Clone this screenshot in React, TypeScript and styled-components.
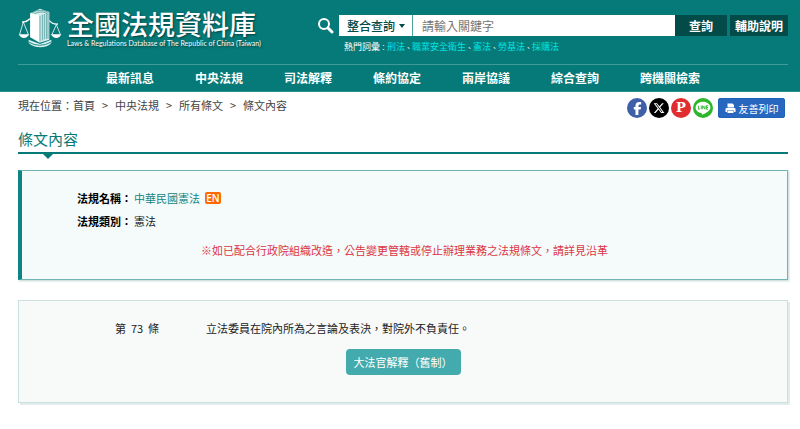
import React from "react";
import styled, { createGlobalStyle } from "styled-components";
import { FaFacebookF, FaXTwitter } from "react-icons/fa6";

const teal = "#067a78";
const darkTeal = "#034b49";

const GlobalStyle = createGlobalStyle`
  *, *::before, *::after { box-sizing: border-box; }
  body {
    margin: 0;
    background: #fff;
    color: #222;
    font-family: "Noto Sans CJK TC", "Liberation Sans", sans-serif;
    font-size: 11px;
    line-height: 16px;
  }
  button, input, select { font-family: inherit; }
  a { color: inherit; text-decoration: none; }
`;

const Header = styled.header`
  background: ${teal};
  padding: 0 12px 0 18px;
  border-bottom: 1px solid #2d8f8d;
`;

const HeaderTop = styled.div`
  display: flex;
  justify-content: space-between;
  gap: 48px;
  height: 64px;
`;

const Brand = styled.a`
  display: flex;
  align-items: flex-start;
  gap: 5px;
  flex: none;
  padding-top: 8px;
  color: #fff;
`;

const BrandText = styled.span`
  display: flex;
  flex-direction: column;
  padding-top: 1px;
  text-shadow: 1px 1px 2px rgba(0, 40, 40, 0.7);
`;

const BrandName = styled.span`
  font-size: 27px;
  line-height: 30px;
  font-weight: 500;
`;

const BrandSub = styled.span`
  font-family: Lato, "Liberation Sans", sans-serif;
  font-size: 7px;
  line-height: 8px;
  white-space: nowrap;
`;

const SearchArea = styled.div`
  flex: 1;
  max-width: 471px;
  padding-top: 15px;
`;

const SearchForm = styled.form`
  display: flex;
  align-items: center;
  height: 21px;
`;

const SearchIcon = styled.svg`
  flex: none;
  margin-right: 5px;
`;

const SelectBox = styled.div`
  display: flex;
  align-items: center;
  position: relative;
  flex: none;
  width: 74px;
  height: 21px;
  background: #fff;
  border-right: 1px solid #4aa3a1;
`;

const ScopeSelect = styled.select`
  appearance: none;
  width: 100%;
  height: 100%;
  border: 0;
  padding: 0 0 0 8px;
  background: transparent;
  color: ${darkTeal};
  font-size: 12px;
  font-weight: 500;
`;

const Caret = styled.span`
  position: absolute;
  right: 7px;
  top: 9px;
  border: 3px solid transparent;
  border-top: 4px solid ${darkTeal};
  border-bottom: 0;
  pointer-events: none;
`;

const Keyword = styled.input`
  flex: 1;
  min-width: 0;
  height: 21px;
  border: 0;
  padding: 0 9px;
  background: #fff;
  font-size: 12px;
  &::placeholder { color: #757575; opacity: 1; }
`;

const DarkButton = styled.button<{ $width: number; $gap?: boolean }>`
  flex: none;
  width: ${(p) => p.$width}px;
  height: 21px;
  margin-left: ${(p) => (p.$gap ? 3 : 0)}px;
  border: 0;
  padding: 0;
  background: ${darkTeal};
  color: #fff;
  font-size: 12px;
  font-weight: 700;
`;

const HotWords = styled.div`
  display: flex;
  margin: 4px 0 0 27px;
  color: #fff;
  font-size: 9px;
  line-height: 14px;
  white-space: nowrap;
  a { color: #00e5e5; }
`;

const HotMark = styled.span`
  font-size: 7px;
`;

const Nav = styled.nav`
  display: flex;
  justify-content: center;
  gap: 41px;
  border-top: 1px solid #3f9b99;
  color: #fff;
  font-size: 12px;
  font-weight: 700;
  line-height: 26px;
  white-space: nowrap;
`;

const Page = styled.main`
  padding: 6px 12px 24px 18px;
`;

const TopRow = styled.div`
  display: flex;
  align-items: center;
  justify-content: space-between;
  height: 20px;
  padding-right: 3px;
`;

const Crumbs = styled.nav`
  display: flex;
  gap: 7px;
  padding-bottom: 6px;
  color: #444;
`;

const CrumbArrow = styled.span`
  width: 6px;
`;

const Share = styled.div`
  display: flex;
  align-items: center;
  gap: 2px;
`;

const ShareLink = styled.a<{ $color: string }>`
  display: flex;
  align-items: center;
  justify-content: center;
  width: 20px;
  height: 20px;
  border-radius: 50%;
  background: ${(p) => p.$color};
  color: #fff;
`;

const PlurkLetter = styled.span`
  font-family: "DejaVu Serif", serif;
  font-size: 13px;
  font-weight: 700;
`;

const PrintButton = styled.button`
  display: flex;
  align-items: center;
  justify-content: center;
  gap: 3px;
  width: 67px;
  height: 20px;
  margin-left: 3px;
  border: 1px solid #2062b4;
  border-radius: 2px;
  padding: 0;
  background: #2867c0;
  color: #fff;
  font-size: 10px;
`;

const Title = styled.h1`
  position: relative;
  margin: 10px 0 16px;
  border-bottom: 2px solid ${teal};
  padding-bottom: 3px;
  color: ${teal};
  font-size: 15px;
  font-weight: 400;
  line-height: 21px;
  &::after {
    content: "";
    position: absolute;
    left: 24px;
    top: 25px;
    border: 6px solid transparent;
    border-top-color: ${teal};
    border-bottom: 0;
  }
`;

const InfoPanel = styled.section`
  padding: 16px 16px 20px 55px;
  border: 1px solid #6fb5b3;
  border-left: 4px solid #108482;
  background: #f5fbfb;
  box-shadow: 1px 1px 2px rgba(0, 80, 80, 0.25);
`;

const InfoList = styled.dl`
  display: grid;
  grid-template-columns: 57px 1fr;
  row-gap: 1px;
  margin: 0;
  line-height: 22px;
  dt { color: #000; font-weight: 700; }
  dd { display: flex; align-items: center; gap: 5px; margin: 0; }
`;

const LawLink = styled.a`
  && { color: #118583; }
`;

const EnBadge = styled.a`
  && { color: #fff; }
  width: 16px;
  border-radius: 2px;
  background: #ff6a00;
  font-family: "Open Sans", sans-serif;
  font-size: 10px;
  font-weight: 600;
  line-height: 12px;
  text-align: center;
`;

const Notice = styled.p`
  margin: 9px 0 0 -39px;
  color: #dc3545;
  line-height: 18px;
  text-align: center;
`;

const ArticlePanel = styled.section`
  margin-top: 20px;
  padding: 18px 16px 27px;
  border: 1px solid #c8e1df;
  background: #f8fafa;
  box-shadow: 2px 2px 0 #e3ecec;
`;

const ArticleRow = styled.div`
  display: grid;
  grid-template-columns: 91px 1fr;
  padding-left: 80px;
  line-height: 18px;
`;

const ArticleNo = styled.span`
  white-space: pre;
`;

const Center = styled.div`
  display: flex;
  justify-content: center;
  margin-top: 12px;
`;

const TealButton = styled.button`
  height: 26px;
  border: 0;
  border-radius: 4px;
  padding: 0 8px;
  background: #43abad;
  color: #fff;
  font-size: 11px;
`;

function LogoMark() {
  return (
    <svg width="44" height="40" viewBox="24 22 132 120" aria-hidden="true">
      <g fill="none" stroke="#fff" strokeWidth="3">
        <path d="M36 64Q50 64 60 54M118 60Q128 72 144 70" strokeWidth="4" />
        <path d="M40 64L29 101M40 64L55 101M139 72L126 101M139 72L151 101" strokeWidth="2.4" />
      </g>
      <path d="M26 101H58Q52 112 42 112T26 101ZM122 101H154Q149 112 139 112T122 101Z" fill="#fff" />
      <path d="M56 117L90 130L124 117V127Q112 140 91 140T56 127Z" fill="#d8efee" />
      <path d="M56 124Q88 144 124 124" fill="none" stroke="#067a78" strokeWidth="2.5" />
      <path d="M60 38L90 24L118 34V117L89 126L60 110Z" fill="#d9eeee" />
      <path d="M62 39L88 44V124L62 108Z" fill="#fff" />
      <path
        d="M66 37Q78 28 94 29Q110 30 116 37M73 39Q84 33 98 34Q108 35 112 40M90 45V123M97 42V119M103 40V116M109 38V115M114 38V114"
        fill="none"
        stroke="#2f8786"
        strokeWidth="2"
      />
    </svg>
  );
}

function LineMark() {
  return (
    <svg width="16" height="16" viewBox="0 0 28 28" aria-hidden="true">
      <path d="M14 3C6.800 3 1 7.500 1 13.200c0 5 4.600 9 10.600 9.800 1.300.3.900 1.500.6 3.200 5.500-2.400 14.800-7.400 14.800-13C27 7.500 21.200 3 14 3Z" fill="#fff" />
      <path d="M6 10v6h3M11 10v6M13.500 16v-6l4 6v-6M23 10h-3v6h3M20 13h3" fill="none" stroke="#2db52b" strokeWidth="1.6" />
    </svg>
  );
}

function PrintMark() {
  return (
    <svg width="11" height="11" viewBox="0 0 22 22" aria-hidden="true">
      <path d="M5 1H15L18 4V9H5ZM3 10H19Q21 10 21 12V18H18V15H4V18H1V12Q1 10 3 10ZM5 16H17V20H5Z" fill="#fff" />
    </svg>
  );
}

const hotWords = ["刑法", "職業安全衛生", "憲法", "勞基法", "採購法"];
const navItems = ["最新訊息", "中央法規", "司法解釋", "條約協定", "兩岸協議", "綜合查詢", "跨機關檢索"];
const crumbs = ["中央法規", "所有條文", "條文內容"];

export default function App() {
  return (
    <>
      <GlobalStyle />
      <Header>
        <HeaderTop>
          <Brand href="#">
            <LogoMark />
            <BrandText>
              <BrandName>全國法規資料庫</BrandName>
              <BrandSub>Laws &amp; Regulations Database of The Republic of China (Taiwan)</BrandSub>
            </BrandText>
          </Brand>
          <SearchArea>
            <SearchForm onSubmit={(e) => e.preventDefault()}>
              <SearchIcon width="17" height="17" viewBox="0 0 17 17" aria-hidden="true">
                <circle cx="7" cy="7" r="5" fill="none" stroke="#fff" strokeWidth="2" />
                <path d="M11 11L15 15" stroke="#fff" strokeWidth="3" strokeLinecap="round" />
              </SearchIcon>
              <SelectBox>
                <ScopeSelect aria-label="查詢範圍">
                  <option>整合查詢</option>
                </ScopeSelect>
                <Caret />
              </SelectBox>
              <Keyword type="text" placeholder="請輸入關鍵字" aria-label="請輸入關鍵字" />
              <DarkButton type="submit" $width={52}>查詢</DarkButton>
              <DarkButton type="button" $width={58} $gap>輔助說明</DarkButton>
            </SearchForm>
            <HotWords>
              <span>熱門詞彙</span>
              <HotMark>：</HotMark>
              {hotWords.map((word, i) => (
                <React.Fragment key={word}>
                  {i > 0 && <HotMark>、</HotMark>}
                  <a href="#">{word}</a>
                </React.Fragment>
              ))}
            </HotWords>
          </SearchArea>
        </HeaderTop>
        <Nav>
          {navItems.map((item) => (
            <a href="#" key={item}>{item}</a>
          ))}
        </Nav>
      </Header>
      <Page>
        <TopRow>
          <Crumbs>
            <span>現在位置：<a href="#">首頁</a></span>
            {crumbs.map((item) => (
              <React.Fragment key={item}>
                <CrumbArrow>&gt;</CrumbArrow>
                <a href="#">{item}</a>
              </React.Fragment>
            ))}
          </Crumbs>
          <Share>
            <ShareLink href="#" $color="#3f5fa8" aria-label="Facebook"><FaFacebookF size={13} /></ShareLink>
            <ShareLink href="#" $color="#000" aria-label="X"><FaXTwitter size={12} /></ShareLink>
            <ShareLink href="#" $color="#e02d32" aria-label="Plurk"><PlurkLetter>P</PlurkLetter></ShareLink>
            <ShareLink href="#" $color="#2db52b" aria-label="LINE"><LineMark /></ShareLink>
            <PrintButton type="button"><PrintMark />友善列印</PrintButton>
          </Share>
        </TopRow>
        <Title>條文內容</Title>
        <InfoPanel>
          <InfoList>
            <dt>法規名稱：</dt>
            <dd><LawLink href="#">中華民國憲法</LawLink><EnBadge href="#">EN</EnBadge></dd>
            <dt>法規類別：</dt>
            <dd>憲法</dd>
          </InfoList>
          <Notice>※如已配合行政院組織改造，公告變更管轄或停止辦理業務之法規條文，請詳見沿革</Notice>
        </InfoPanel>
        <ArticlePanel>
          <ArticleRow>
            <ArticleNo>第  73  條</ArticleNo>
            <span>立法委員在院內所為之言論及表決，對院外不負責任。</span>
          </ArticleRow>
          <Center>
            <TealButton type="button">大法官解釋（舊制）</TealButton>
          </Center>
        </ArticlePanel>
      </Page>
    </>
  );
}
